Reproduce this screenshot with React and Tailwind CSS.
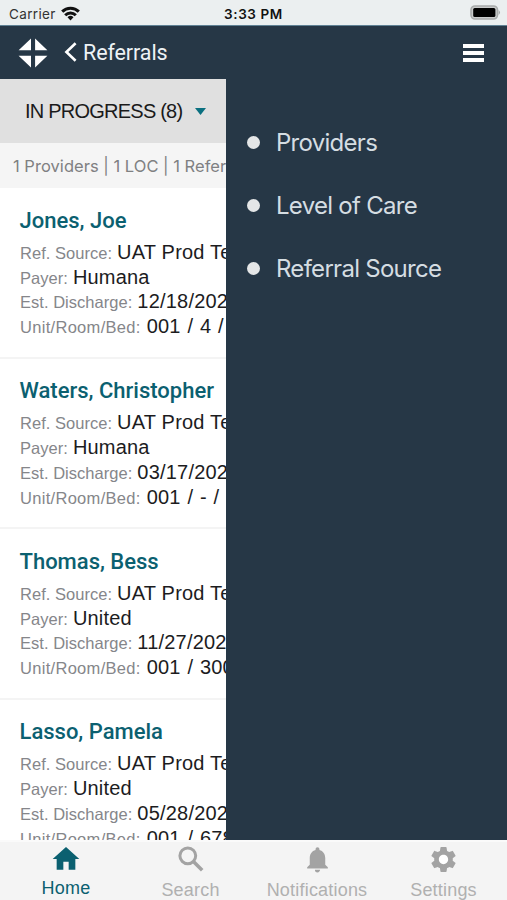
import React from 'react';
import { MdHome, MdNotifications, MdSettings } from 'react-icons/md';

const referrals = [
  { name: 'Jones, Joe', payer: 'Humana', discharge: '12/18/2020', unit: '001 / 4 / 2' },
  { name: 'Waters, Christopher', payer: 'Humana', discharge: '03/17/2020', unit: '001 / - / -' },
  { name: 'Thomas, Bess', payer: 'United', discharge: '11/27/2020', unit: '001 / 300 / 1' },
  { name: 'Lasso, Pamela', payer: 'United', discharge: '05/28/2020', unit: '001 / 678 / 1' }
];

const StatusBar = () => (
  <div className="h-[26px] shrink-0 grid grid-cols-3 items-center bg-[#ebeff0] text-[#111] border-b border-[#5f8194]">
    <div className="flex items-center pl-[9px] pt-[3px] font-['Inter',sans-serif] text-[13.5px] leading-4 tracking-[0.35px] text-[#333]">
      Carrier
      <svg className="ml-[5px] -mt-[2px] w-[19px] h-[15px]" viewBox="0 0 19 15" fill="none" stroke="#111" strokeWidth="3">
        <path d="M1.2 5.6a11.8 11.8 0 0 1 16.6 0" />
        <path d="M4.2 9.2a7.5 7.5 0 0 1 10.6 0" />
        <path d="M9.5 14.4l-3-3.1a4.3 4.3 0 0 1 6 0z" fill="#111" stroke="none" />
      </svg>
    </div>
    <div className="text-center whitespace-nowrap pt-[3px] font-['Inter',sans-serif] text-[13.5px] leading-4 font-semibold tracking-[0.6px]">
      3:33 PM
    </div>
    <div className="flex justify-end pr-[6px]">
      <svg className="w-[31px] h-[15px]" viewBox="0 0 31 15">
        <rect x="1" y="1" width="26.5" height="13" rx="4" fill="#c9cbcb" stroke="#a8abab" strokeWidth="1.6" />
        <rect x="3.2" y="3" width="22.2" height="9" rx="1.5" fill="#000" />
        <path d="M28.6 5q2.8 2.5 0 5z" fill="#a5a8a8" />
      </svg>
    </div>
  </div>
);

const Header = () => (
  <header className="h-[53px] shrink-0 flex items-center bg-[#263746] pl-[18px] pr-[23px] text-white">
    <svg className="w-[30px] h-[30px]" viewBox="0 0 30 30" fill="#fff">
      <path d="M13 .5v11.7H.6zM17.1 .5v11.7h12.3zM13 29.5V17.8H.6zM17.1 29.5V17.8h12.3z" />
    </svg>
    <svg className="ml-[16px] -mt-[2px] w-[14px] h-[22px]" viewBox="0 0 14 22" fill="none" stroke="#fff" strokeWidth="2.6">
      <path d="M11.6 2.2L2.4 11l9.2 8.8" />
    </svg>
    <h1 className="ml-[5px] font-['Roboto',sans-serif] text-[21.5px] leading-6 tracking-[-0.1px] text-[#eef3f6]">Referrals</h1>
    <div className="ml-auto w-[21px] flex flex-col gap-[3px]">
      <span className="h-[4px] bg-white"></span>
      <span className="h-[4px] bg-white"></span>
      <span className="h-[4px] bg-white"></span>
    </div>
  </header>
);

const Field = ({ label, value, wide }) => (
  <div className={`h-[24.8px] flex items-baseline whitespace-nowrap leading-[25px] ${wide ? '[word-spacing:1px]' : ''}`}>
    <span className={`text-[16.5px] text-[#85868a] ${wide ? 'tracking-[0.3px]' : 'tracking-[0.03px]'}`}>{label}:</span>
    <span className={`text-[20px] tracking-[0.2px] text-[#1c1c1e] ${wide ? 'ml-[6px]' : 'ml-[5px]'}`}>{value}</span>
  </div>
);

const ReferralCard = ({ referral }) => (
  <div className="h-[170.5px] shrink-0 pt-[18.5px] pl-5 border-b-2 border-[#f4f4f4]">
    <h2 className="h-[33.4px] -ml-[0.5px] leading-[28px] whitespace-nowrap font-['Roboto',sans-serif] font-medium text-[22px] text-[#0b6070]">
      {referral.name}
    </h2>
    <Field label="Ref. Source" value="UAT Prod Test" />
    <Field label="Payer" value={referral.payer} />
    <Field label="Est. Discharge" value={referral.discharge} />
    <Field label="Unit/Room/Bed" value={referral.unit} wide />
  </div>
);

const MenuItem = ({ label }) => (
  <li className="h-[63px] flex items-center">
    <span className="w-[13px] h-[13px] rounded-full bg-[#e4e6e7]"></span>
    <span className="ml-[16px] pt-px whitespace-nowrap font-['Inter',sans-serif] text-[24px] tracking-[-0.72px] text-[#d5dde2]">{label}</span>
  </li>
);

const SearchIcon = () => (
  <svg className="w-[26px] h-[26px]" viewBox="0 0 26 26" fill="none" stroke="currentColor">
    <circle cx="9.8" cy="9.8" r="7.9" strokeWidth="3" />
    <path d="M15.4 15.4l8.8 8.8" strokeWidth="3.6" />
  </svg>
);

const Tab = ({ icon, label, active }) => (
  <div className={`flex flex-col items-center ${active ? 'text-[#0b6070]' : 'text-[#a3a3a3]'}`}>
    <div className="h-[34px] flex items-center">{icon}</div>
    <span className={`text-[18px] leading-5 tracking-[0.2px] ${active ? 'pt-[2px]' : 'pt-[4px] text-[#b0b0b0]'}`}>{label}</span>
  </div>
);

export default function App() {
  return (
    <div className="w-full h-[900px] flex flex-col overflow-hidden bg-white font-['Liberation_Sans',Arial,sans-serif]">
      <StatusBar />
      <Header />
      <div className="flex-1 min-h-0 flex">
        <main className="w-[226px] shrink-0 flex flex-col overflow-hidden">
          <div className="h-[64px] shrink-0 flex items-center pl-[25px] bg-[#e0e0e0] text-[20px] text-[#1a1a1a] whitespace-nowrap">
            <span className="tracking-[-0.77px]">IN PROGRESS (8)</span>
            <svg className="ml-[13px] w-[11px] h-[7px] shrink-0" viewBox="0 0 11 7">
              <path d="M0 0h11L5.5 7z" fill="#0b7080" />
            </svg>
          </div>
          <div className="h-[45px] shrink-0 pl-[13px] leading-[46px] bg-[#f5f5f5] whitespace-nowrap font-['Inter',sans-serif] text-[16.5px] tracking-[0.05px] [word-spacing:-0.1px] text-[#7f8082]">
            1 Providers | 1 LOC | 1 Referral Source
          </div>
          {referrals.map((referral) => (
            <ReferralCard key={referral.name} referral={referral} />
          ))}
        </main>
        <aside className="flex-1 bg-[#263746] pl-[21px] pt-[32px]">
          <ul>
            <MenuItem label="Providers" />
            <MenuItem label="Level of Care" />
            <MenuItem label="Referral Source" />
          </ul>
        </aside>
      </div>
      <nav className="h-[60px] shrink-0 grid grid-cols-[132px_117px_136px_117px] bg-[#f4f4f4] border-t-2 border-[#fafafa]">
        <Tab active label="Home" icon={<MdHome size={32} />} />
        <Tab label="Search" icon={<SearchIcon />} />
        <Tab label="Notifications" icon={<MdNotifications size={31} />} />
        <Tab
          label="Settings"
          icon={<MdSettings size={31} className="bg-[radial-gradient(circle,white_5px,transparent_6px)]" />}
        />
      </nav>
    </div>
  );
}
